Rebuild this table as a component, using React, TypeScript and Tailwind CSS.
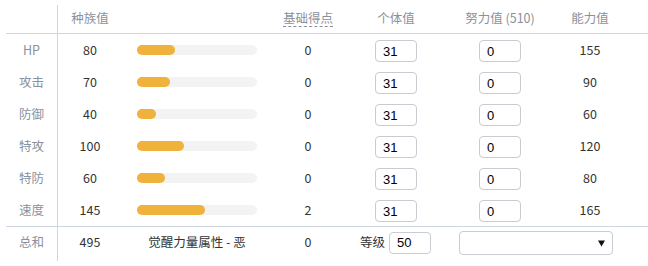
import React from 'react'

interface StatRow {
  label: string
  base: number
  points: number
  iv: number
  ev: number
  value: number
}

const rows: StatRow[] = [
  { label: 'HP', base: 80, points: 0, iv: 31, ev: 0, value: 155 },
  { label: '攻击', base: 70, points: 0, iv: 31, ev: 0, value: 90 },
  { label: '防御', base: 40, points: 0, iv: 31, ev: 0, value: 60 },
  { label: '特攻', base: 100, points: 0, iv: 31, ev: 0, value: 120 },
  { label: '特防', base: 60, points: 0, iv: 31, ev: 0, value: 80 },
  { label: '速度', base: 145, points: 2, iv: 31, ev: 0, value: 165 },
]

const cols = 'grid grid-cols-[52px_64px_150px_72px_104px_104px_76px]'
const labelCell = 'flex items-center justify-center border-r border-[#cfd5df] text-[#8a919c]'

function NumInput({ value }: { value: number }) {
  return (
    <input
      readOnly
      value={value}
      className="w-[42px] h-[22px] rounded-[4px] border border-[#c9ccd2] bg-white px-[7px] text-[13px] text-black outline-none font-['Liberation_Sans',Arial,sans-serif]"
    />
  )
}

export default function App() {
  return (
    <div className="bg-white w-[648px] h-[266px] pt-[5px] pl-[6px] text-[12.5px] text-[#333] font-['Noto_Sans_CJK_SC','Noto_Sans',sans-serif]">
      {/* 表头 */}
      <div className={`${cols} h-[29px] border-b border-[#cfd5df] text-[#8a919c]`}>
        <div className="border-r border-[#cfd5df]" />
        <div className="flex items-center justify-center pb-[2px]">种族值</div>
        <div />
        <div className="flex items-center justify-center pb-[1px]">
          <span className="border-b border-dashed border-[#8a919c] leading-[16px]">基础得点</span>
        </div>
        <div className="flex items-center justify-center pb-[2px]">个体值</div>
        <div className="flex items-center justify-center pb-[2px]">努力值 (510)</div>
        <div className="flex items-center justify-center pb-[2px]">能力值</div>
      </div>

      {/* 各项数值 */}
      {rows.map((r) => (
        <div key={r.label} className={`${cols} h-[32px]`}>
          <div className={labelCell}>{r.label}</div>
          <div className="flex items-center justify-center">{r.base}</div>
          <div className="flex items-center pl-[15px]">
            <div className="w-[120px] h-[10px] rounded-full bg-[#f3f3f3]">
              <div
                className="h-full rounded-full bg-[#efb33b]"
                style={{ width: `${Math.round((r.base / 255) * 120)}px` }}
              />
            </div>
          </div>
          <div className="flex items-center justify-center">{r.points}</div>
          <div className="flex items-center justify-center pt-[2px]">
            <NumInput value={r.iv} />
          </div>
          <div className="flex items-center justify-center pt-[2px]">
            <NumInput value={r.ev} />
          </div>
          <div className="flex items-center justify-center">{r.value}</div>
        </div>
      ))}

      {/* 总和 */}
      <div className={`${cols} h-[35px] border-t border-[#cfd5df]`}>
        <div className={`${labelCell} pb-[3px]`}>总和</div>
        <div className="flex items-center justify-center pb-[3px]">495</div>
        <div className="flex items-center justify-center pb-[3px]">觉醒力量属性 - 恶</div>
        <div className="flex items-center justify-center pb-[3px]">0</div>
        <div className="flex items-center justify-end pr-[17px] gap-[4px] pb-[3px]">
          <span>等级</span>
          <NumInput value={50} />
        </div>
        <div className="col-span-2 flex items-center pl-[11px] pb-[3px]">
          <div className="relative w-[154px] h-[24px] rounded-[4px] border border-[#c9ccd2] bg-white">
            <svg className="absolute right-[7px] top-[8px]" width="7" height="7" viewBox="0 0 7 7">
              <path d="M0 0.5h7L3.5 6.5z" fill="#111" />
            </svg>
          </div>
        </div>
      </div>
    </div>
  )
}
